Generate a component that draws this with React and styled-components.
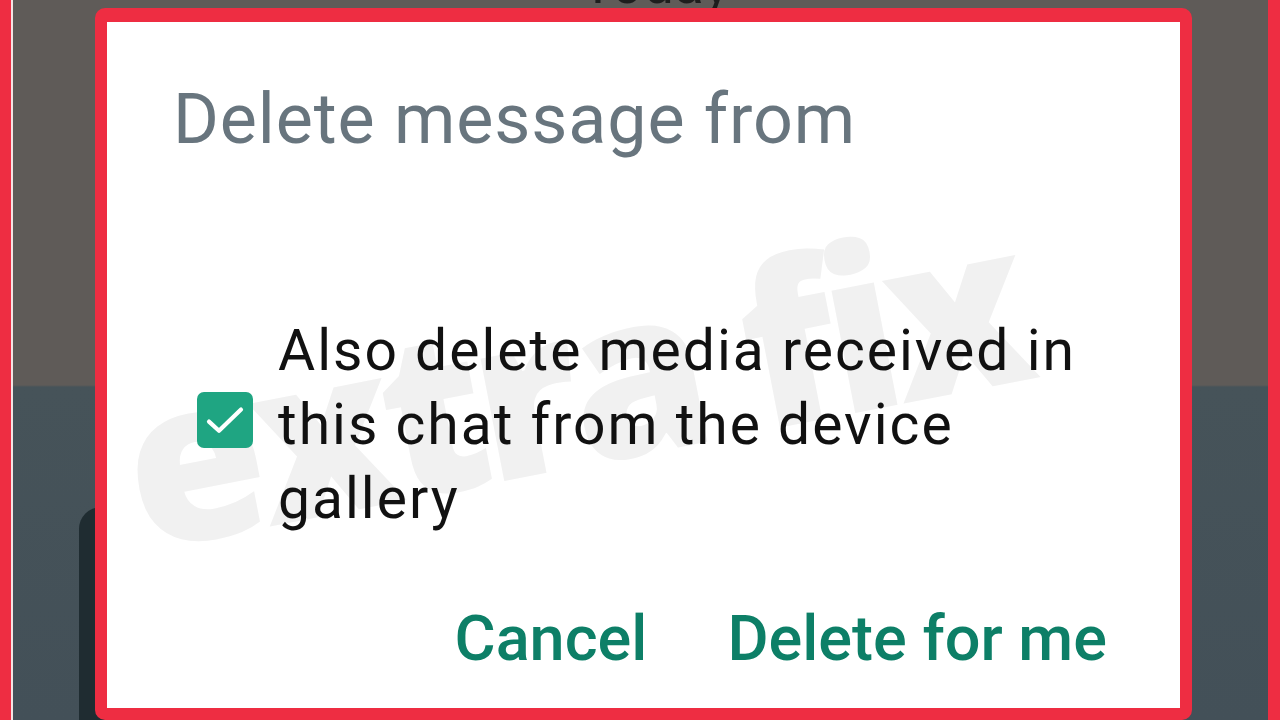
import styled, { createGlobalStyle } from 'styled-components';

const GlobalStyle = createGlobalStyle`
  html, body {
    margin: 0;
    padding: 0;
    background: #5e5a57;
  }
  * {
    box-sizing: border-box;
  }
`;

const Frame = styled.div`
  width: 1280px;
  height: 720px;
  display: flex;
  overflow: hidden;
  border-left: 11px solid #ee2d42;
  border-right: 12px solid #ee2d42;
  font-family: Roboto, 'Noto Sans', Arial, sans-serif;
`;

const Screen = styled.div`
  position: relative;
  flex: 1;
  display: flex;
  flex-direction: column;
  border-left: 2px solid #f4e3e3;
  background: linear-gradient(
    to bottom,
    #5f5b58 0,
    #5f5b58 385px,
    #465359 387px,
    #435058 100%
  );
`;

const DateStrip = styled.div`
  height: 8px;
  overflow: hidden;
  display: flex;
  justify-content: center;
  align-items: flex-end;
  padding-left: 30px;
`;

const DateLabel = styled.span`
  font-size: 55px;
  line-height: 1;
  color: #1d1d1d;
  margin-bottom: -4px;
`;

const Bubble = styled.div`
  position: absolute;
  left: 66px;
  top: 507px;
  width: 60px;
  height: 260px;
  border-radius: 22px 0 0 0;
  background: #1f2c31;
`;

const Dialog = styled.div`
  position: relative;
  z-index: 1;
  margin-left: 82px;
  width: 1097px;
  height: 720px;
  background: #fff;
  border: 12px solid #ee2d42;
  border-top-width: 14px;
  border-radius: 10px;
  overflow: hidden;
  display: flex;
  flex-direction: column;
  padding: 55px 73px 0 66px;
`;

const Watermark = styled.div`
  position: absolute;
  left: 40px;
  top: 330px;
  font-family: 'Open Sans', Roboto, sans-serif;
  font-size: 225px;
  font-weight: 800;
  letter-spacing: -10px;
  line-height: 1;
  color: #f1f1f1;
  transform: rotate(-11deg);
  transform-origin: left bottom;
  white-space: nowrap;
  pointer-events: none;
  z-index: 0;
`;

const Title = styled.h2`
  position: relative;
  margin: 0;
  font-size: 70px;
  line-height: 84px;
  font-weight: 400;
  letter-spacing: 0.9px;
  color: #68757e;
`;

const OptionRow = styled.label`
  position: relative;
  display: flex;
  align-items: center;
  gap: 25px;
  margin-top: 153px;
  padding-left: 24px;
`;

const Box = styled.span`
  flex: none;
  width: 56px;
  height: 56px;
  margin-bottom: 10px;
  border-radius: 7px;
  background: #1fa582;
  display: flex;
  align-items: center;
  justify-content: center;
`;

const OptionText = styled.span`
  font-size: 57px;
  line-height: 74px;
  letter-spacing: 2px;
  color: #111;
  width: 820px;
`;

const Actions = styled.div`
  position: relative;
  display: flex;
  justify-content: flex-end;
  gap: 80px;
  margin-top: 65px;
`;

const ActionButton = styled.button`
  border: 0;
  background: none;
  padding: 0;
  font-family: inherit;
  font-size: 63px;
  line-height: 76px;
  font-weight: 500;
  color: #0d7f67;
  cursor: pointer;
`;

const App = () => {
  return (
    <>
      <GlobalStyle />
      <Frame>
        <Screen>
          <DateStrip>
            <DateLabel>Today</DateLabel>
          </DateStrip>
          <Bubble />
          <Dialog>
            <Watermark>extra fix</Watermark>
            <Title>Delete message from</Title>
            <OptionRow>
              <Box>
                <svg width='48' height='48' viewBox='0 0 24 24' fill='none'>
                  <path
                    d='M4 12.8l5 4.6L20 6.8'
                    stroke='#fff'
                    strokeWidth='2.1'
                    strokeLinecap='round'
                    strokeLinejoin='round'
                  />
                </svg>
              </Box>
              <OptionText>
                Also delete media received in this chat from the device gallery
              </OptionText>
            </OptionRow>
            <Actions>
              <ActionButton>Cancel</ActionButton>
              <ActionButton>Delete for me</ActionButton>
            </Actions>
          </Dialog>
        </Screen>
      </Frame>
    </>
  );
};

export default App;
